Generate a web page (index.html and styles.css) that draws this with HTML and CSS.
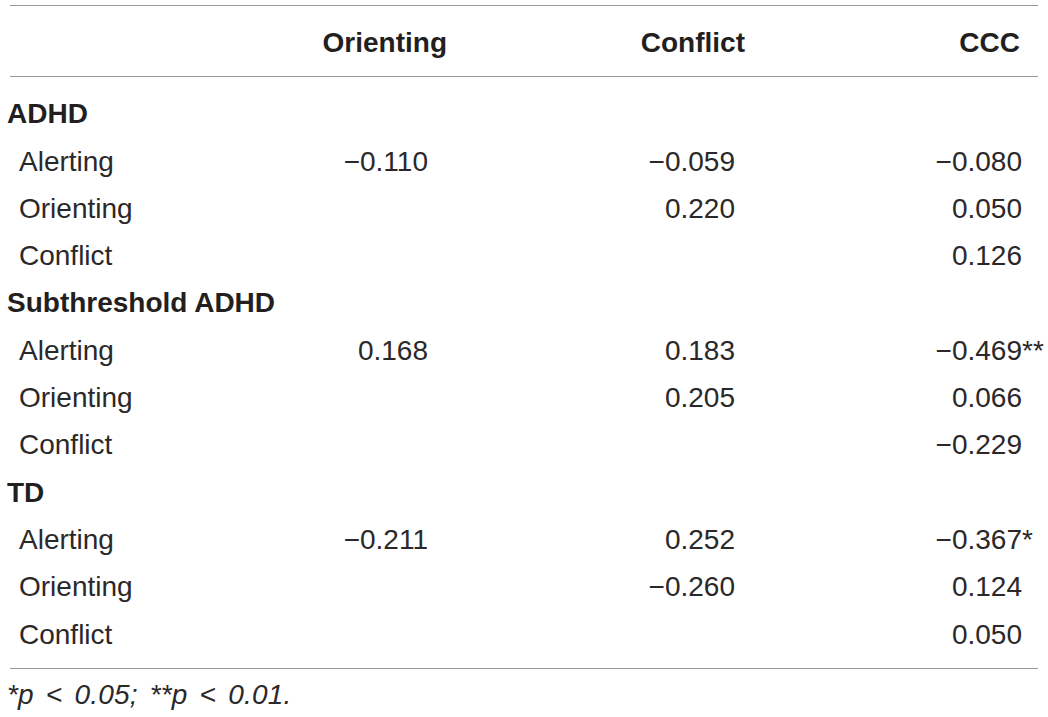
FILE: index.html
```html
<!DOCTYPE html>
<html lang="en">
<head>
<meta charset="utf-8">
<title>Correlations</title>
<link rel="stylesheet" href="styles.css">
</head>
<body>
<div class="page">
  <div class="rule rule-top"></div>
  <div class="row head">
    <div class="lab"></div>
    <div class="c1">Orienting</div>
    <div class="c2">Conflict</div>
    <div class="c3">CCC</div>
  </div>
  <div class="rule"></div>
  <div class="body">
    <div class="row group"><div class="lab">ADHD</div></div>
    <div class="row"><div class="lab">Alerting</div><div class="c1">&minus;0.110</div><div class="c2">&minus;0.059</div><div class="c3">&minus;0.080</div></div>
    <div class="row"><div class="lab">Orienting</div><div class="c1"></div><div class="c2">0.220</div><div class="c3">0.050</div></div>
    <div class="row"><div class="lab">Conflict</div><div class="c1"></div><div class="c2"></div><div class="c3">0.126</div></div>
    <div class="row group"><div class="lab">Subthreshold ADHD</div></div>
    <div class="row"><div class="lab">Alerting</div><div class="c1">0.168</div><div class="c2">0.183</div><div class="c3">&minus;0.469<span class="sig">**</span></div></div>
    <div class="row"><div class="lab">Orienting</div><div class="c1"></div><div class="c2">0.205</div><div class="c3">0.066</div></div>
    <div class="row"><div class="lab">Conflict</div><div class="c1"></div><div class="c2"></div><div class="c3">&minus;0.229</div></div>
    <div class="row group"><div class="lab">TD</div></div>
    <div class="row"><div class="lab">Alerting</div><div class="c1">&minus;0.211</div><div class="c2">0.252</div><div class="c3">&minus;0.367<span class="sig">*</span></div></div>
    <div class="row"><div class="lab">Orienting</div><div class="c1"></div><div class="c2">&minus;0.260</div><div class="c3">0.124</div></div>
    <div class="row"><div class="lab">Conflict</div><div class="c1"></div><div class="c2"></div><div class="c3">0.050</div></div>
  </div>
  <div class="rule"></div>
  <p class="note">*<i>p</i> &lt; 0.05; **<i>p</i> &lt; 0.01.</p>
</div>
</body>
</html>
```
FILE: styles.css
```css
html, body {
  margin: 0;
  padding: 0;
  background: #ffffff;
}
body {
  font-family: "Liberation Sans", Arial, Helvetica, sans-serif;
  font-size: 28px;
  color: #2b2829;
}
.page {
  width: 1048px;
  padding-top: 5px;
}
.rule {
  margin-left: 10px;
  width: 1028px;
  height: 1px;
  background: #9a9a9a;
}
.row {
  display: grid;
  grid-template-columns: 298px 150px 297px 277px;
  line-height: 47.3px;
  height: 47.3px;
  white-space: nowrap;
}
.row .lab {
  padding-left: 19px;
}
.row.group .lab {
  padding-left: 7px;
  font-weight: bold;
  color: #231f20;
  grid-column: 1 / -1;
}
.c1, .c2, .c3 {
  text-align: right;
}
.c1 { padding-right: 20px; }
.c2 { padding-right: 10px; }
.c3 { padding-right: 0; }
.head {
  padding: 13px 0 10px;
  font-weight: bold;
  color: #231f20;
}
.head .c1 { padding-right: 1px; }
.head .c2 { padding-right: 0; }
.head .c3 { padding-right: 2px; }
.body {
  padding: 13px 0 10px;
}
.sig {
  display: inline-block;
  width: 0;
  text-align: left;
  overflow: visible;
}
.note {
  margin: 9px 0 0;
  padding-left: 7px;
  line-height: 34px;
  font-style: italic;
  letter-spacing: 0.2px;
  word-spacing: 4px;
}
```
